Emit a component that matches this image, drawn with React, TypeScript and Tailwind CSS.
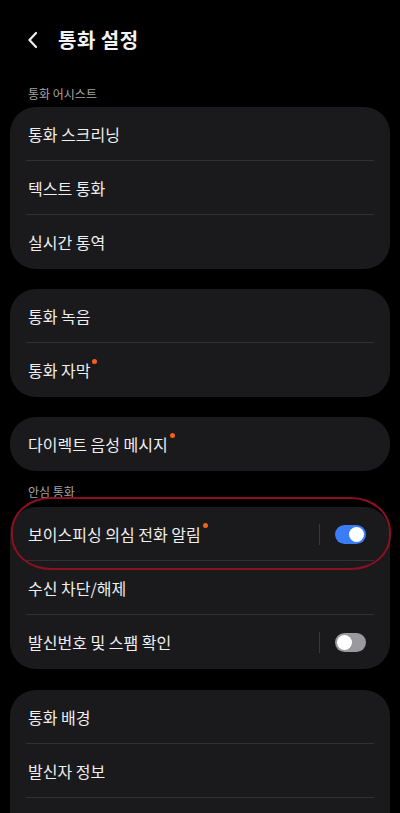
import React from "react";

const font = { fontFamily: '"Noto Sans CJK KR", "Noto Sans", sans-serif' };

function Dot() {
  return <span className="inline-block w-[5px] h-[5px] rounded-full bg-[#f2601c] ml-[2px] relative top-[-9px]" />;
}

function Row({ label, dot, toggle, last }: { label: string; dot?: boolean; toggle?: "on" | "off"; last?: boolean }) {
  return (
    <div className="relative h-[54px] flex items-center px-[18px]">
      <div className="flex-1 flex items-center text-[16px] text-[#efeff0]">
        <span>{label}</span>
        {dot && <Dot />}
      </div>
      {toggle && (
        <div className="flex items-center">
          <div className="w-px h-[21px] bg-[#38383a] mr-[15px]" />
          {toggle === "on" ? (
            <div className="w-[31px] h-[19px] rounded-full bg-[#3b7cf7] flex items-center justify-end px-[2px]">
              <div className="w-[15px] h-[15px] rounded-full bg-white" />
            </div>
          ) : (
            <div className="w-[31px] h-[19px] rounded-full bg-[#9a9a9e] flex items-center justify-start px-[2px]">
              <div className="w-[15px] h-[15px] rounded-full bg-white" />
            </div>
          )}
          <div className="w-[6px]" />
        </div>
      )}
      {!last && <div className="absolute left-[16px] right-[16px] bottom-0 h-px bg-[#313133]" />}
    </div>
  );
}

function Card({ children }: { children: React.ReactNode }) {
  return <div className="mx-[10px] rounded-[26px] bg-[#1a1a1c] overflow-hidden">{children}</div>;
}

export default function App() {
  return (
    <div className="w-[400px] h-[813px] bg-black overflow-hidden relative" style={font}>
      <div className="h-[80px] flex items-center pl-[26px] pt-[0px]">
        <svg width="14" height="20" viewBox="0 0 14 20" className="mr-[18px]">
          <path d="M10 3 L3.5 10 L10 17" stroke="#f0f0f0" strokeWidth="2.2" fill="none" strokeLinecap="round" strokeLinejoin="round" />
        </svg>
        <span className="text-[20px] font-bold text-[#f2f2f2] tracking-[0.5px]">통화 설정</span>
      </div>
      <div className="px-[28px] text-[12px] text-[#a4a4a6] h-[27px] flex items-center">통화 어시스트</div>
      <Card>
        <Row label="통화 스크리닝" />
        <Row label="텍스트 통화" />
        <Row label="실시간 통역" last />
      </Card>
      <div className="h-[20px]" />
      <Card>
        <Row label="통화 녹음" />
        <Row label="통화 자막" dot last />
      </Card>
      <div className="h-[20px]" />
      <Card>
        <Row label="다이렉트 음성 메시지" dot last />
      </Card>
      <div className="px-[28px] text-[12px] text-[#a4a4a6] h-[36px] flex items-center pt-[6px]">안심 통화</div>
      <Card>
        <Row label="보이스피싱 의심 전화 알림" dot toggle="on" />
        <Row label="수신 차단/해제" />
        <Row label="발신번호 및 스팸 확인" toggle="off" last />
      </Card>
      <div className="h-[21px]" />
      <Card>
        <Row label="통화 배경" />
        <Row label="발신자 정보" />
        <Row label="" />
      </Card>
      <div className="absolute left-[11px] top-[497px] w-[380px] h-[73px] border-2 border-[#8c1022] rounded-[40px/34px] pointer-events-none" />
    </div>
  );
}
